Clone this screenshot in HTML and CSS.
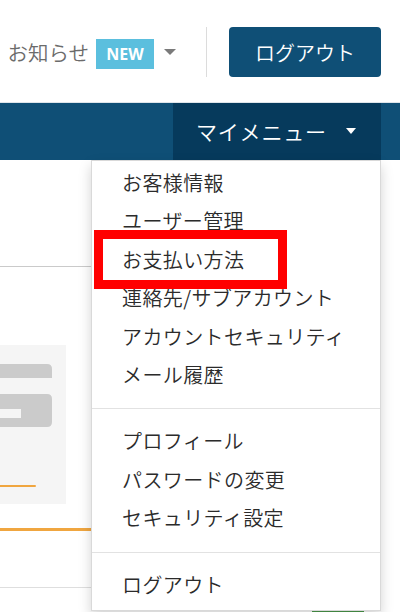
FILE: index.html
```html
<!DOCTYPE html>
<html lang="ja">
<head>
<meta charset="utf-8">
<link rel="stylesheet" href="styles.css">
</head>
<body>
<header class="header">
  <div class="notice">
    <span class="notice-label">お知らせ</span>
    <span class="badge">NEW</span>
    <span class="caret caret-gray"></span>
  </div>
  <div class="vsep"></div>
  <button class="logout-btn">ログアウト</button>
</header>
<nav class="nav">
  <div class="nav-fill"></div>
  <div class="mymenu">
    <span class="mymenu-label">マイメニュー</span>
    <span class="caret caret-white"></span>
  </div>
  <div class="nav-end"></div>
</nav>
<main class="content">
  <div class="left-col">
    <div class="hline hline-top"></div>
    <div class="card">
      <svg class="card-shape" width="66" height="70" viewBox="0 0 66 70">
        <path d="M0 0 H47 Q52 0 52 5 V14 H0 Z" fill="#cbcbcb"/>
        <path d="M0 30 H47 Q52 30 52 35 V58 Q52 63 47 63 H0 V54 H21 V45 H0 Z" fill="#cbcbcb"/>
      </svg>
      <div class="card-bar"></div>
    </div>
    <div class="orange-line"></div>
    <div class="hline hline-bottom"></div>
  </div>
  <div class="right-col">
    <div class="green-btn"></div>
  </div>
  <div class="dropdown">
    <ul class="menu-group">
      <li>お客様情報</li>
      <li>ユーザー管理</li>
      <li>お支払い方法</li>
      <li>連絡先/サブアカウント</li>
      <li>アカウントセキュリティ</li>
      <li>メール履歴</li>
    </ul>
    <div class="divider"></div>
    <ul class="menu-group">
      <li>プロフィール</li>
      <li>パスワードの変更</li>
      <li>セキュリティ設定</li>
    </ul>
    <div class="divider"></div>
    <ul class="menu-group">
      <li>ログアウト</li>
    </ul>
  </div>
  <div class="highlight"></div>
</main>
</body>
</html>
```
FILE: styles.css
```css
* { box-sizing: border-box; }
html, body {
  margin: 0;
  padding: 0;
  background: #fff;
  font-family: "Noto Sans CJK JP", "Noto Sans", sans-serif;
  font-weight: 350;
  width: 400px;
  height: 612px;
  overflow: hidden;
}
.header {
  height: 103px;
  display: flex;
  align-items: center;
  justify-content: flex-end;
  padding: 2px 19px 0 0;
  border-bottom: 1px solid #dfe5ea;
}
.notice {
  display: flex;
  align-items: center;
}
.notice-label {
  font-size: 20.5px;
  color: #6b6b6b;
  line-height: 30px;
}
.badge {
  margin-left: 7px;
  width: 58px;
  height: 30px;
  background: #5bbfde;
  color: #fff;
  font-family: "Open Sans", "Liberation Sans", sans-serif;
  font-weight: 700;
  font-size: 16px;
  line-height: 30px;
  text-align: center;
  margin-top: 4px;
}
.caret {
  display: inline-block;
  width: 0;
  height: 0;
  border-left: 6px solid transparent;
  border-right: 6px solid transparent;
}
.caret-gray {
  border-top: 6px solid #7a7a7a;
  margin-left: 10px;
}
.vsep {
  width: 1px;
  height: 50px;
  background: #dcdcdc;
  margin: 0 22px 0 30px;
}
.logout-btn {
  width: 152px;
  height: 50px;
  background: #0f4f76;
  border: none;
  border-radius: 4px;
  color: #fff;
  font-family: "Noto Sans CJK JP", sans-serif;
  font-weight: 350;
  font-size: 20px;
  padding: 0;
}
.nav {
  height: 57px;
  display: flex;
  background: #0f4f76;
}
.nav-fill { width: 173px; }
.mymenu {
  width: 208px;
  background: #063a5c;
  display: flex;
  align-items: center;
  padding: 0 0 2px 23px;
}
.mymenu-label {
  color: #fff;
  font-size: 21px;
  letter-spacing: 0.8px;
}
.caret-white {
  border-left-width: 5.5px;
  border-right-width: 5.5px;
  border-top: 6px solid #fff;
  margin-left: 19px;
}
.nav-end { flex: 1; }
.content {
  position: relative;
  display: flex;
  height: 452px;
}
.left-col {
  width: 92px;
  flex: none;
}
.hline {
  height: 1px;
  background: #cacaca;
}
.hline-top { margin-top: 106px; }
.card {
  margin-top: 78px;
  width: 66px;
  height: 159px;
  background: #f5f5f5;
  padding-top: 19px;
}
.card-shape { display: block; }
.card-bar {
  margin-top: 51px;
  width: 36px;
  height: 2px;
  background: #f0a640;
  border-radius: 0 1px 1px 0;
}
.orange-line {
  margin-top: 24px;
  height: 3px;
  background: #f0a640;
}
.hline-bottom {
  margin-top: 56px;
  background: #dedede;
}
.right-col {
  flex: 1;
  padding: 450px 0 0 220px;
}
.green-btn {
  width: 52px;
  height: 4px;
  background: #4b9a4b;
}
.dropdown {
  position: absolute;
  left: 91px;
  top: 0;
  width: 290px;
  height: 451px;
  background: #fff;
  border: 1px solid rgba(0,0,0,0.15);
  box-shadow: 0 6px 12px rgba(0,0,0,0.175);
  padding-top: 3px;
}
.menu-group {
  list-style: none;
  margin: 0;
  padding: 0;
}
.menu-group li {
  padding-left: 30px;
  font-size: 20px;
  letter-spacing: 0.4px;
  line-height: 38.4px;
  color: #2b2b2b;
  white-space: nowrap;
}
.divider {
  height: 1px;
  background: #e2e2e2;
  margin: 14px 0 13px;
}
.highlight {
  position: absolute;
  left: 94px;
  top: 70px;
  width: 193px;
  height: 59px;
  border: 9px solid #ff0000;
}
```
